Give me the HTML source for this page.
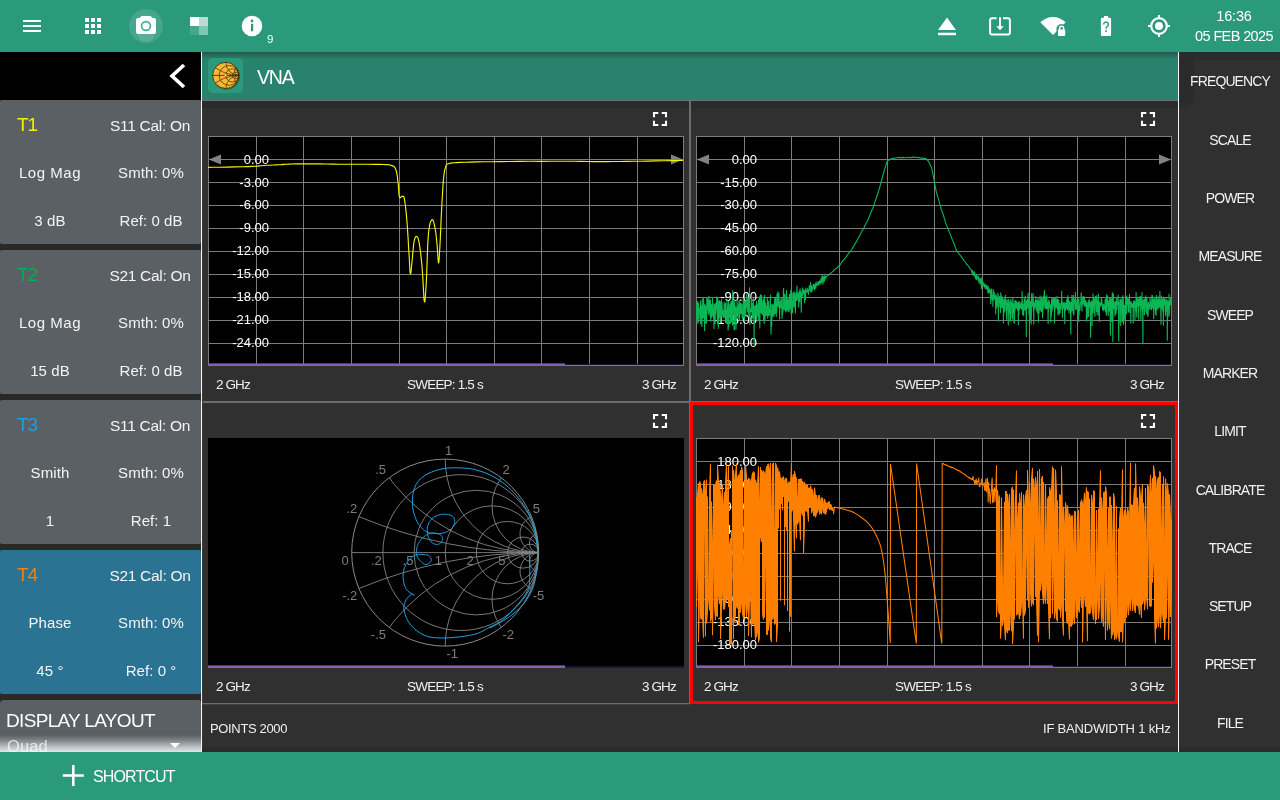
<!DOCTYPE html><html><head><meta charset="utf-8"><style>
*{box-sizing:border-box}
html,body{margin:0;padding:0;width:1280px;height:800px;overflow:hidden;background:#303030;font-family:"Liberation Sans",sans-serif;color:#fff}
.a{position:absolute}
.t{position:absolute;white-space:pre;line-height:1;will-change:transform}
svg{will-change:transform}
</style></head><body>
<div class="a" style="left:0;top:0;width:1280px;height:52px;background:#2a997c"></div>
<div class="a" style="left:0;top:52px;width:201px;height:48px;background:#000"></div>
<div class="a" style="left:202px;top:52px;width:976px;height:48px;background:#29826e"></div>
<div class="a" style="left:0;top:100px;width:201px;height:652px;background:#282928"></div>
<div class="a" style="left:0;top:100px;width:201px;height:144px;background:#5a6063;border-radius:2px"></div>
<div class="t" style="left:17px;top:114.9px;font-size:19px;color:#f0f000;letter-spacing:-1.0px;">T1</div>
<div class="t" style="left:149.6px;top:117.7px;font-size:15.5px;color:#f4f4f4;letter-spacing:-0.3px;transform:translateX(-50%);">S11 Cal: On</div>
<div class="t" style="left:50.3px;top:164.9px;font-size:15px;color:#f4f4f4;letter-spacing:0.55px;transform:translateX(-50%);">Log Mag</div>
<div class="t" style="left:150.5px;top:164.9px;font-size:15px;color:#f4f4f4;letter-spacing:0.1px;transform:translateX(-50%);">Smth: 0%</div>
<div class="t" style="left:50.2px;top:213.3px;font-size:15px;color:#f4f4f4;letter-spacing:0.1px;transform:translateX(-50%);">3 dB</div>
<div class="t" style="left:150.7px;top:213.3px;font-size:15px;color:#f4f4f4;letter-spacing:0.05px;transform:translateX(-50%);">Ref: 0 dB</div>
<div class="a" style="left:0;top:250px;width:201px;height:144px;background:#5a6063;border-radius:2px"></div>
<div class="t" style="left:17px;top:264.9px;font-size:19px;color:#00b050;letter-spacing:-1.0px;">T2</div>
<div class="t" style="left:149.6px;top:267.7px;font-size:15.5px;color:#f4f4f4;letter-spacing:-0.3px;transform:translateX(-50%);">S21 Cal: On</div>
<div class="t" style="left:50.3px;top:314.9px;font-size:15px;color:#f4f4f4;letter-spacing:0.55px;transform:translateX(-50%);">Log Mag</div>
<div class="t" style="left:150.5px;top:314.9px;font-size:15px;color:#f4f4f4;letter-spacing:0.1px;transform:translateX(-50%);">Smth: 0%</div>
<div class="t" style="left:50.2px;top:363.3px;font-size:15px;color:#f4f4f4;letter-spacing:0.1px;transform:translateX(-50%);">15 dB</div>
<div class="t" style="left:150.7px;top:363.3px;font-size:15px;color:#f4f4f4;letter-spacing:0.05px;transform:translateX(-50%);">Ref: 0 dB</div>
<div class="a" style="left:0;top:400px;width:201px;height:144px;background:#5a6063;border-radius:2px"></div>
<div class="t" style="left:17px;top:414.9px;font-size:19px;color:#1ea0e0;letter-spacing:-1.0px;">T3</div>
<div class="t" style="left:149.6px;top:417.7px;font-size:15.5px;color:#f4f4f4;letter-spacing:-0.3px;transform:translateX(-50%);">S11 Cal: On</div>
<div class="t" style="left:50.3px;top:464.9px;font-size:15px;color:#f4f4f4;letter-spacing:0.1px;transform:translateX(-50%);">Smith</div>
<div class="t" style="left:150.5px;top:464.9px;font-size:15px;color:#f4f4f4;letter-spacing:0.1px;transform:translateX(-50%);">Smth: 0%</div>
<div class="t" style="left:50.2px;top:513.3px;font-size:15px;color:#f4f4f4;letter-spacing:0.1px;transform:translateX(-50%);">1</div>
<div class="t" style="left:150.7px;top:513.3px;font-size:15px;color:#f4f4f4;letter-spacing:0.05px;transform:translateX(-50%);">Ref: 1</div>
<div class="a" style="left:0;top:550px;width:201px;height:144px;background:#2a7393;border-radius:2px"></div>
<div class="t" style="left:17px;top:564.9px;font-size:19px;color:#f08010;letter-spacing:-1.0px;">T4</div>
<div class="t" style="left:149.6px;top:567.7px;font-size:15.5px;color:#f4f4f4;letter-spacing:-0.3px;transform:translateX(-50%);">S21 Cal: On</div>
<div class="t" style="left:50.3px;top:614.9px;font-size:15px;color:#f4f4f4;letter-spacing:0.1px;transform:translateX(-50%);">Phase</div>
<div class="t" style="left:150.5px;top:614.9px;font-size:15px;color:#f4f4f4;letter-spacing:0.1px;transform:translateX(-50%);">Smth: 0%</div>
<div class="t" style="left:50.2px;top:663.3px;font-size:15px;color:#f4f4f4;letter-spacing:0.1px;transform:translateX(-50%);">45 °</div>
<div class="t" style="left:150.7px;top:663.3px;font-size:15px;color:#f4f4f4;letter-spacing:0.05px;transform:translateX(-50%);">Ref: 0 °</div>
<div class="a" style="left:0;top:700px;width:201px;height:52px;background:#5a6063;border-radius:4px 3px 0 0"></div>
<div class="t" style="left:5.7px;top:710.9px;font-size:19px;color:#fff;letter-spacing:-0.68px;">DISPLAY LAYOUT</div>
<div class="a" style="left:0;top:735px;width:201px;height:17px;background:linear-gradient(rgba(90,96,99,0) 0,rgba(150,155,158,0.7) 35%,rgba(200,204,207,0.95) 75%,#e2e5e7 100%)"></div>
<div class="t" style="left:6.5px;top:737.5px;font-size:16.5px;color:rgba(245,247,248,0.8);letter-spacing:0.1px;">Quad</div>
<svg class="a" style="left:0;top:0" width="201" height="800"><path d="M170 743L180 743L175 748Z" fill="#fff"/></svg>
<svg class="a" style="left:0;top:52px" width="201" height="48"><path d="M184 13L172 24L184 35" stroke="#fff" stroke-width="3.6" fill="none" stroke-linecap="butt" stroke-linejoin="miter"/></svg>
<div class="a" style="left:201px;top:52px;width:1px;height:700px;background:#f4f4f4"></div><div class="a" style="left:202px;top:100px;width:1px;height:652px;background:#3a3739"></div>
<div class="a" style="left:1178px;top:52px;width:1px;height:700px;background:#f4f4f4"></div>
<svg class="a" style="left:0;top:0" width="1280" height="52"><path d="M23 20H41V22H23ZM23 25H41V27H23ZM23 30H41V32H23Z" fill="#fff"/><path d="M85 18h4v4h-4ZM91 18h4v4h-4ZM97 18h4v4h-4ZM85 24h4v4h-4ZM91 24h4v4h-4ZM97 24h4v4h-4ZM85 30h4v4h-4ZM91 30h4v4h-4ZM97 30h4v4h-4Z" fill="#fff"/><circle cx="146" cy="26" r="17" fill="#fff" fill-opacity="0.13"/><circle cx="146" cy="33.5" r="8.5" fill="#fff" fill-opacity="0.10"/><path d="M141.5 16h9l2 2h1.5a2 2 0 0 1 2 2v12a2 2 0 0 1 -2 2h-16a2 2 0 0 1 -2 -2v-12a2 2 0 0 1 2 -2h1.5Z" fill="#fff"/><circle cx="146" cy="26" r="4.4" fill="none" stroke="#45a98d" stroke-width="1.6"/><rect x="190" y="17" width="9" height="9" fill="#fff"/><rect x="199" y="17" width="9" height="9" fill="#b7ded5"/><rect x="190" y="26" width="9" height="9" fill="#45a78b"/><rect x="199" y="26" width="9" height="9" fill="#80c6b4"/><circle cx="252" cy="26" r="10.3" fill="#fff"/><circle cx="252" cy="21" r="1.4" fill="#2a997c"/><rect x="251" y="23.8" width="2.2" height="7.4" fill="#2a997c"/><path d="M947 17.5L956 30H938Z" fill="#fff"/><rect x="938" y="32.7" width="18" height="2.5" fill="#fff"/><path d="M996.6 18.2H992.1a2 2 0 0 0 -2 2V32.6a2 2 0 0 0 2 2H1007.9a2 2 0 0 0 2 -2V20.2a2 2 0 0 0 -2 -2H1003" fill="none" stroke="#fff" stroke-width="2"/><rect x="999" y="17.2" width="2" height="10" fill="#fff"/><path d="M996.2 26.2H1003.8L1000 30.2Z" fill="#fff"/><path d="M1053 35L1040.3 22.3A18 18 0 0 1 1065.7 22.3L1063.4 24.6A5 5 0 0 0 1056.5 27.4V31.5Z" fill="#fff"/><rect x="1058" y="29.6" width="7.2" height="6.3" rx="0.8" fill="#fff"/><path d="M1059.6 30V28.3a2 2 0 0 1 4 0V30" fill="none" stroke="#fff" stroke-width="1.5"/><path d="M1104 15.9h4.1v1.9h1.8a1.2 1.2 0 0 1 1.2 1.2V34.7a1.2 1.2 0 0 1 -1.2 1.2h-7.8a1.2 1.2 0 0 1 -1.2 -1.2V19a1.2 1.2 0 0 1 1.2 -1.2h1.9Z" fill="#fff"/><path d="M1103.6 24.5a2.4 2.4 0 1 1 3.6 2.1c-0.9 0.5 -1.2 1 -1.2 2.2" fill="none" stroke="#2a997c" stroke-width="1.5"/><rect x="1105.2" y="30.2" width="1.7" height="1.7" fill="#2a997c"/><circle cx="1159" cy="26" r="7.8" fill="none" stroke="#fff" stroke-width="2.2"/><circle cx="1159" cy="26" r="4" fill="#fff"/><path d="M1159 15V18.5M1159 33.5V37M1148 26H1151.5M1166.5 26H1170" stroke="#fff" stroke-width="2"/></svg>
<div class="t" style="left:267px;top:33.8px;font-size:11.5px;color:#fff;letter-spacing:0px;">9</div>
<div class="t" style="left:1234px;top:8.7px;font-size:14.5px;color:#fff;letter-spacing:-0.2px;transform:translateX(-50%);">16:36</div>
<div class="t" style="left:1234px;top:28.7px;font-size:14.5px;color:#fff;letter-spacing:-0.62px;transform:translateX(-50%);">05 FEB 2025</div>
<div class="a" style="left:202px;top:52px;width:976px;height:7px;background:linear-gradient(#225a48,rgba(41,130,110,0))"></div>
<div class="a" style="left:208px;top:58px;width:35px;height:35px;background:#2a997c;border-radius:5px"></div>
<svg class="a" style="left:208px;top:58px" width="35" height="35"><defs><clipPath id="cc"><circle cx="17.75" cy="17.4" r="13.2"/></clipPath></defs><circle cx="18.5" cy="18.3" r="13.4" fill="#143f33" fill-opacity="0.55"/><circle cx="17.75" cy="17.4" r="13.2" fill="#f7b835"/><g clip-path="url(#cc)" stroke="#4a3208" stroke-width="0.75" fill="none"><circle cx="21.05" cy="17.4" r="9.90"/><circle cx="24.35" cy="17.4" r="6.60"/><circle cx="27.65" cy="17.4" r="3.30"/><circle cx="30.95" cy="-22.20" r="39.60"/><circle cx="30.95" cy="57.00" r="39.60"/><circle cx="30.95" cy="4.20" r="13.20"/><circle cx="30.95" cy="30.60" r="13.20"/><circle cx="30.95" cy="13.00" r="4.40"/><circle cx="30.95" cy="21.80" r="4.40"/><path d="M4.5 17.4H31" stroke-width="0.9"/></g><circle cx="17.75" cy="17.4" r="13.1" fill="none" stroke="#3a2806" stroke-width="0.9"/><circle cx="17.5" cy="17.4" r="0.8" fill="#fff"/></svg>
<div class="t" style="left:256.8px;top:67.7px;font-size:19.5px;color:#fff;letter-spacing:-1.2px;">VNA</div>
<div class="a" style="left:1179px;top:52px;width:101px;height:700px;background:#303030"></div>
<div class="a" style="left:1179px;top:52px;width:15px;height:56px;background:#2b2b2b;border-bottom-right-radius:12px"></div>
<div class="a" style="left:1179px;top:52px;width:101px;height:8px;background:#2b2b2b"></div>
<div class="t" style="left:1230px;top:74.1px;font-size:14px;color:#f2f2f2;letter-spacing:-0.9px;transform:translateX(-50%);">FREQUENCY</div>
<div class="t" style="left:1230px;top:132.5px;font-size:14px;color:#f2f2f2;letter-spacing:-0.9px;transform:translateX(-50%);">SCALE</div>
<div class="t" style="left:1230px;top:190.8px;font-size:14px;color:#f2f2f2;letter-spacing:-0.9px;transform:translateX(-50%);">POWER</div>
<div class="t" style="left:1230px;top:249.1px;font-size:14px;color:#f2f2f2;letter-spacing:-0.9px;transform:translateX(-50%);">MEASURE</div>
<div class="t" style="left:1230px;top:307.5px;font-size:14px;color:#f2f2f2;letter-spacing:-0.9px;transform:translateX(-50%);">SWEEP</div>
<div class="t" style="left:1230px;top:365.8px;font-size:14px;color:#f2f2f2;letter-spacing:-0.9px;transform:translateX(-50%);">MARKER</div>
<div class="t" style="left:1230px;top:424.1px;font-size:14px;color:#f2f2f2;letter-spacing:-0.9px;transform:translateX(-50%);">LIMIT</div>
<div class="t" style="left:1230px;top:482.5px;font-size:14px;color:#f2f2f2;letter-spacing:-0.9px;transform:translateX(-50%);">CALIBRATE</div>
<div class="t" style="left:1230px;top:540.8px;font-size:14px;color:#f2f2f2;letter-spacing:-0.9px;transform:translateX(-50%);">TRACE</div>
<div class="t" style="left:1230px;top:599.1px;font-size:14px;color:#f2f2f2;letter-spacing:-0.9px;transform:translateX(-50%);">SETUP</div>
<div class="t" style="left:1230px;top:657.4px;font-size:14px;color:#f2f2f2;letter-spacing:-0.9px;transform:translateX(-50%);">PRESET</div>
<div class="t" style="left:1230px;top:715.8px;font-size:14px;color:#f2f2f2;letter-spacing:-0.9px;transform:translateX(-50%);">FILE</div>
<svg class="a" style="left:0;top:0" width="1280" height="800"><rect x="202" y="100" width="976" height="1" fill="#6e6e6e"/><rect x="202" y="101" width="976" height="7" fill="#2b2b2b"/><rect x="689" y="101" width="2" height="603" fill="#6c6e6a"/><rect x="203" y="401" width="975" height="2" fill="#6c6e6a"/><rect x="202" y="703" width="488" height="1.3" fill="#6c6e6a"/><rect x="208" y="136" width="476" height="230" fill="#000"/><path d="M256.5 136V366M303.5 136V366M351.5 136V366M399.5 136V366M446.5 136V366M494.5 136V366M541.5 136V366M589.5 136V366M637.5 136V366M208 159.5H684M208 182.5H684M208 205.5H684M208 228.5H684M208 251.5H684M208 274.5H684M208 297.5H684M208 320.5H684M208 343.5H684" stroke="#7c7c7c" stroke-width="1" fill="none"/><rect x="208.5" y="136.5" width="475" height="229" fill="none" stroke="#7c7c7c" stroke-width="1"/><rect x="209" y="364" width="474" height="1" fill="#1c1630"/><rect x="208" y="363.4" width="357" height="2.6" fill="#8160b4"/><path d="M654 117.3V113H658.3M661.7 113H666V117.3M666 120.7V125H661.7M658.3 125H654V120.7" fill="none" stroke="#fff" stroke-width="2.1"/><rect x="696" y="136" width="476" height="230" fill="#000"/><path d="M744.5 136V366M791.5 136V366M839.5 136V366M887.5 136V366M934.5 136V366M982.5 136V366M1029.5 136V366M1077.5 136V366M1125.5 136V366M696 159.5H1172M696 182.5H1172M696 205.5H1172M696 228.5H1172M696 251.5H1172M696 274.5H1172M696 297.5H1172M696 320.5H1172M696 343.5H1172" stroke="#7c7c7c" stroke-width="1" fill="none"/><rect x="696.5" y="136.5" width="475" height="229" fill="none" stroke="#7c7c7c" stroke-width="1"/><rect x="697" y="364" width="474" height="1" fill="#1c1630"/><rect x="696" y="363.4" width="357" height="2.6" fill="#8160b4"/><path d="M1142 117.3V113H1146.3M1149.7 113H1154V117.3M1154 120.7V125H1149.7M1146.3 125H1142V120.7" fill="none" stroke="#fff" stroke-width="2.1"/><rect x="208" y="438" width="476" height="230" fill="#000"/><rect x="208" y="666" width="476" height="2" fill="#1a1530"/><rect x="208" y="665.4" width="357" height="2.6" fill="#8160b4"/><path d="M654 419.3V415H658.3M661.7 415H666V419.3M666 422.7V427H661.7M658.3 427H654V422.7" fill="none" stroke="#fff" stroke-width="2.1"/><rect x="696" y="438" width="476" height="230" fill="#000"/><path d="M744.5 438V668M791.5 438V668M839.5 438V668M887.5 438V668M934.5 438V668M982.5 438V668M1029.5 438V668M1077.5 438V668M1125.5 438V668M696 461.5H1172M696 484.5H1172M696 507.5H1172M696 530.5H1172M696 553.5H1172M696 576.5H1172M696 599.5H1172M696 622.5H1172M696 645.5H1172" stroke="#7c7c7c" stroke-width="1" fill="none"/><rect x="696.5" y="438.5" width="475" height="229" fill="none" stroke="#7c7c7c" stroke-width="1"/><rect x="697" y="666" width="474" height="1" fill="#1c1630"/><rect x="696" y="665.4" width="357" height="2.6" fill="#8160b4"/><path d="M1142 419.3V415H1146.3M1149.7 415H1154V419.3M1154 422.7V427H1149.7M1146.3 427H1142V422.7" fill="none" stroke="#fff" stroke-width="2.1"/></svg>
<svg class="a" style="left:0;top:0;font-family:'Liberation Sans',sans-serif" width="1280" height="800"><text x="269" y="163.6" text-anchor="end" font-size="13" fill="#fff">0.00</text><text x="269" y="186.5" text-anchor="end" font-size="13" fill="#fff">-3.00</text><text x="269" y="209.4" text-anchor="end" font-size="13" fill="#fff">-6.00</text><text x="269" y="232.3" text-anchor="end" font-size="13" fill="#fff">-9.00</text><text x="269" y="255.2" text-anchor="end" font-size="13" fill="#fff">-12.00</text><text x="269" y="278.1" text-anchor="end" font-size="13" fill="#fff">-15.00</text><text x="269" y="301.0" text-anchor="end" font-size="13" fill="#fff">-18.00</text><text x="269" y="323.9" text-anchor="end" font-size="13" fill="#fff">-21.00</text><text x="269" y="346.8" text-anchor="end" font-size="13" fill="#fff">-24.00</text><text x="757" y="163.6" text-anchor="end" font-size="13" fill="#fff">0.00</text><text x="757" y="186.5" text-anchor="end" font-size="13" fill="#fff">-15.00</text><text x="757" y="209.4" text-anchor="end" font-size="13" fill="#fff">-30.00</text><text x="757" y="232.3" text-anchor="end" font-size="13" fill="#fff">-45.00</text><text x="757" y="255.2" text-anchor="end" font-size="13" fill="#fff">-60.00</text><text x="757" y="278.1" text-anchor="end" font-size="13" fill="#fff">-75.00</text><text x="757" y="301.0" text-anchor="end" font-size="13" fill="#fff">-90.00</text><text x="757" y="323.9" text-anchor="end" font-size="13" fill="#fff">-105.00</text><text x="757" y="346.8" text-anchor="end" font-size="13" fill="#fff">-120.00</text><text x="757" y="465.6" text-anchor="end" font-size="13" fill="#fff">180.00</text><text x="757" y="488.5" text-anchor="end" font-size="13" fill="#fff">135.00</text><text x="757" y="511.4" text-anchor="end" font-size="13" fill="#fff">90.00</text><text x="757" y="534.3" text-anchor="end" font-size="13" fill="#fff">45.00</text><text x="757" y="557.2" text-anchor="end" font-size="13" fill="#fff">0.00</text><text x="757" y="580.1" text-anchor="end" font-size="13" fill="#fff">-45.00</text><text x="757" y="603.0" text-anchor="end" font-size="13" fill="#fff">-90.00</text><text x="757" y="625.9" text-anchor="end" font-size="13" fill="#fff">-135.00</text><text x="757" y="648.8" text-anchor="end" font-size="13" fill="#fff">-180.00</text><path d="M208.8 159.5L221 154.5V164.5Z" fill="#828282"/><path d="M683.2 159.5L671 154.5V164.5Z" fill="#828282"/><path d="M696.8 159.5L709 154.5V164.5Z" fill="#828282"/><path d="M1171.2 159.5L1159 154.5V164.5Z" fill="#828282"/></svg>
<svg class="a" style="left:0;top:0;font-family:'Liberation Sans',sans-serif" width="1280" height="800"><defs><clipPath id="c1"><rect x="208" y="136" width="476" height="229"/></clipPath><clipPath id="c2"><rect x="696" y="136" width="476" height="229"/></clipPath><clipPath id="c4"><rect x="696" y="438" width="476" height="229"/></clipPath></defs><g clip-path="url(#c1)"><path d="M208.0 167.4L212.6 167.3L219.3 167.2L227.0 167.1L235.0 166.9L242.3 166.8L248.0 166.6L252.0 166.4L255.1 166.2L257.4 166.1L259.5 165.9L261.6 165.7L264.0 165.5L266.8 165.3L269.5 165.2L272.3 165.0L275.1 164.9L278.0 164.7L281.0 164.6L283.8 164.4L286.4 164.3L289.1 164.1L292.0 164.0L295.6 163.9L300.0 163.8L305.5 163.8L311.8 163.9L318.7 163.9L325.9 164.0L333.1 164.1L340.0 164.2L347.0 164.2L354.4 164.2L361.8 164.2L368.7 164.3L375.0 164.3L380.0 164.4L383.7 164.5L386.4 164.6L388.2 164.7L389.6 164.9L390.8 165.2L392.0 165.6L393.2 166.1L394.0 166.5L394.6 167.1L395.1 167.9L395.5 168.8L396.0 170.0L396.5 171.5L396.8 173.3L397.2 175.3L397.5 177.5L397.7 179.7L398.0 182.0L398.3 184.5L398.5 187.4L398.7 190.3L398.9 193.0L399.1 195.4L399.4 197.0L399.8 197.8L400.2 197.8L400.6 197.5L401.1 196.9L401.6 196.5L402.0 196.4L402.4 196.4L402.8 196.3L403.2 196.2L403.6 196.5L404.0 197.3L404.4 199.0L404.8 201.5L405.3 204.8L405.7 208.7L406.2 212.9L406.6 217.4L407.0 222.0L407.4 227.0L407.7 232.4L408.1 238.2L408.4 243.9L408.7 249.3L409.0 254.0L409.3 258.4L409.5 262.7L409.7 266.8L409.9 270.1L410.2 272.7L410.4 274.0L410.7 273.9L410.9 272.7L411.2 270.5L411.4 267.8L411.7 264.8L412.0 262.0L412.3 259.0L412.6 255.4L412.9 251.6L413.3 247.9L413.6 244.6L414.0 242.0L414.4 240.1L414.8 238.7L415.2 237.6L415.6 236.9L416.0 236.5L416.4 236.4L416.8 236.5L417.2 236.8L417.7 237.4L418.1 238.4L418.5 239.9L419.0 242.0L419.5 244.8L420.0 248.2L420.5 252.1L421.0 256.4L421.5 261.1L422.0 266.0L422.4 272.0L422.9 279.3L423.3 286.9L423.7 293.9L424.0 299.2L424.4 302.0L424.8 302.0L425.1 299.9L425.4 296.1L425.7 291.3L426.1 285.7L426.4 280.0L426.7 273.4L427.0 265.3L427.3 256.5L427.6 247.9L428.0 240.1L428.4 234.0L428.9 229.5L429.5 226.0L430.1 223.4L430.8 221.5L431.4 220.3L432.0 219.6L432.5 219.6L433.1 220.4L433.6 221.9L434.1 223.8L434.6 225.9L435.0 228.0L435.4 230.2L435.8 232.7L436.1 235.3L436.4 238.2L436.7 241.1L437.0 244.0L437.3 247.4L437.6 251.5L437.8 255.7L438.1 259.4L438.3 262.0L438.6 263.0L438.8 262.2L439.1 260.0L439.3 256.8L439.5 252.9L439.8 248.5L440.0 244.0L440.3 239.2L440.5 233.7L440.8 227.8L441.0 221.7L441.3 215.7L441.6 210.0L441.9 204.3L442.2 198.4L442.6 192.6L442.9 187.1L443.2 182.2L443.6 178.0L444.0 174.7L444.3 172.2L444.7 170.2L445.1 168.5L445.6 167.2L446.0 166.0L446.4 165.0L446.7 164.4L447.0 164.1L447.4 164.0L448.0 163.8L449.0 163.6L450.0 163.3L451.0 163.1L452.2 162.9L453.9 162.7L456.4 162.6L460.0 162.4L464.8 162.2L470.4 162.1L476.9 161.9L484.1 161.8L491.8 161.7L500.0 161.6L509.1 161.5L519.3 161.4L530.0 161.3L540.7 161.3L550.9 161.2L560.0 161.2L567.8 161.2L574.8 161.3L581.2 161.4L587.4 161.5L593.6 161.6L600.0 161.6L606.6 161.6L613.2 161.5L619.8 161.5L626.4 161.4L633.2 161.3L640.0 161.2L647.5 161.1L655.7 160.9L664.0 160.8L671.7 160.6L678.3 160.5L683.0 160.4" fill="none" stroke="#f4f400" stroke-width="1.15" stroke-linejoin="round"/></g><g clip-path="url(#c2)"><path d="M696.0 301.0L696.2 311.5L696.4 312.1L696.7 316.1L696.9 319.0L697.1 315.4L697.3 303.9L697.5 301.6L697.8 323.5L698.0 313.5L698.2 304.1L698.4 303.1L698.6 321.4L698.9 308.7L699.1 319.0L699.3 313.7L699.5 309.1L699.7 308.8L700.0 307.0L700.2 310.5L700.4 300.7L700.6 323.6L700.8 319.8L701.1 313.3L701.3 308.6L701.5 305.6L701.7 306.9L701.9 326.2L702.2 299.0L702.4 316.9L702.6 308.4L702.8 318.3L703.0 309.4L703.3 317.8L703.5 297.4L703.7 303.1L703.9 309.0L704.1 313.2L704.4 315.5L704.6 330.5L704.8 307.6L705.0 304.2L705.2 308.5L705.5 306.6L705.7 306.3L705.9 323.3L706.1 312.8L706.3 310.5L706.6 323.1L706.8 297.5L707.0 310.2L707.2 309.3L707.4 304.1L707.7 303.4L707.9 298.8L708.1 306.0L708.3 314.2L708.5 305.9L708.8 312.3L709.0 296.4L709.2 306.9L709.4 307.3L709.6 300.9L709.9 315.8L710.1 309.0L710.3 307.4L710.5 300.0L710.7 321.2L711.0 310.2L711.2 312.8L711.4 304.5L711.6 317.5L711.8 313.7L712.1 304.6L712.3 315.6L712.5 298.2L712.7 304.0L712.9 310.6L713.2 304.0L713.4 317.4L713.6 318.9L713.8 311.6L714.0 328.6L714.3 314.4L714.5 304.1L714.7 303.9L714.9 307.3L715.1 323.6L715.4 311.2L715.6 313.7L715.8 309.3L716.0 302.5L716.2 308.4L716.5 305.6L716.7 296.9L716.9 303.4L717.1 311.9L717.3 319.0L717.6 323.8L717.8 298.3L718.0 319.8L718.2 302.1L718.4 328.3L718.7 301.5L718.9 303.2L719.1 318.9L719.3 314.3L719.5 300.6L719.8 310.4L720.0 316.8L720.2 313.6L720.4 302.1L720.6 312.3L720.9 321.2L721.1 301.5L721.3 307.3L721.5 299.5L721.7 315.8L722.0 302.5L722.2 307.4L722.4 313.8L722.6 314.0L722.8 312.2L723.1 317.4L723.3 310.6L723.5 313.4L723.7 317.3L723.9 315.4L724.2 302.2L724.4 307.7L724.6 311.6L724.8 317.8L725.0 311.9L725.3 305.3L725.5 303.2L725.7 322.5L725.9 309.7L726.1 319.4L726.4 309.8L726.6 319.8L726.8 323.5L727.0 299.9L727.2 318.4L727.5 305.1L727.7 305.6L727.9 307.4L728.1 330.2L728.3 307.6L728.6 301.2L728.8 326.7L729.0 311.8L729.2 315.3L729.4 307.7L729.7 308.7L729.9 304.3L730.1 304.0L730.3 308.0L730.5 323.1L730.8 319.4L731.0 300.7L731.2 308.3L731.4 321.7L731.6 305.4L731.9 305.4L732.1 301.4L732.3 305.3L732.5 325.3L732.7 290.5L733.0 312.7L733.2 310.0L733.4 301.3L733.6 306.2L733.8 309.6L734.1 329.6L734.3 304.7L734.5 329.8L734.7 299.9L734.9 307.1L735.2 306.4L735.4 318.6L735.6 314.6L735.8 317.6L736.0 329.2L736.3 307.4L736.5 308.8L736.7 316.4L736.9 312.1L737.1 300.4L737.4 316.0L737.6 311.0L737.8 307.8L738.0 317.0L738.2 318.5L738.5 305.3L738.7 304.0L738.9 304.0L739.1 301.1L739.3 300.3L739.6 320.1L739.8 307.0L740.0 305.9L740.2 307.6L740.4 303.1L740.7 313.6L740.9 311.2L741.1 309.7L741.3 303.8L741.5 310.5L741.8 304.5L742.0 315.5L742.2 317.4L742.4 315.8L742.6 319.2L742.9 318.9L743.1 306.6L743.3 298.3L743.5 306.0L743.7 310.5L744.0 314.1L744.2 304.5L744.4 320.7L744.6 302.6L744.8 303.0L745.1 312.0L745.3 312.4L745.5 300.9L745.7 315.8L745.9 309.1L746.2 308.8L746.4 305.8L746.6 306.8L746.8 294.1L747.0 305.1L747.3 304.0L747.5 303.3L747.7 311.6L747.9 306.1L748.1 297.9L748.4 315.0L748.6 298.5L748.8 297.7L749.0 306.3L749.2 306.7L749.5 287.9L749.7 320.1L749.9 324.4L750.1 308.8L750.3 309.9L750.6 311.0L750.8 310.4L751.0 308.4L751.2 311.8L751.4 296.3L751.7 304.1L751.9 303.2L752.1 314.5L752.3 318.7L752.5 303.9L752.8 317.2L753.0 307.1L753.2 310.6L753.4 297.8L753.6 306.8L753.9 320.7L754.1 344.9L754.3 306.8L754.5 312.1L754.7 310.1L755.0 315.9L755.2 305.2L755.4 310.0L755.6 306.1L755.8 314.2L756.1 319.8L756.3 306.1L756.5 301.4L756.7 319.4L756.9 304.8L757.2 308.0L757.4 315.7L757.6 309.7L757.8 315.9L758.0 303.8L758.3 312.7L758.5 299.7L758.7 320.9L758.9 310.1L759.1 309.0L759.4 296.9L759.6 314.1L759.8 327.9L760.0 311.6L760.2 308.2L760.5 294.9L760.7 298.7L760.9 312.7L761.1 312.6L761.3 307.4L761.6 295.3L761.8 306.0L762.0 313.4L762.2 301.9L762.4 314.4L762.7 305.9L762.9 303.5L763.1 303.4L763.3 299.3L763.5 319.6L763.8 315.7L764.0 317.0L764.2 323.4L764.4 295.4L764.6 303.0L764.9 319.7L765.1 316.7L765.3 305.4L765.5 302.7L765.7 315.2L766.0 310.4L766.2 306.5L766.4 309.7L766.6 313.0L766.8 315.4L767.1 308.2L767.3 298.2L767.5 310.7L767.7 318.3L767.9 305.4L768.2 312.4L768.4 301.3L768.6 315.6L768.8 309.2L769.0 315.4L769.3 313.9L769.5 315.1L769.7 308.8L769.9 305.8L770.1 308.0L770.4 295.1L770.6 311.0L770.8 314.8L771.0 334.1L771.2 325.9L771.5 310.8L771.7 325.9L771.9 304.3L772.1 312.5L772.3 304.2L772.6 309.3L772.8 316.8L773.0 309.5L773.2 305.0L773.4 313.3L773.7 311.5L773.9 311.6L774.1 316.1L774.3 303.9L774.5 300.7L774.8 298.2L775.0 311.7L775.2 313.4L775.4 300.5L775.6 297.3L775.9 307.6L776.1 304.6L776.3 316.4L776.5 303.1L776.7 312.7L777.0 294.0L777.2 307.1L777.4 295.7L777.6 301.2L777.8 291.9L778.1 304.0L778.3 305.1L778.5 300.5L778.7 306.9L778.9 293.1L779.2 302.5L779.4 304.2L779.6 319.1L779.8 307.5L780.0 304.9L780.3 301.7L780.5 304.3L780.7 307.7L780.9 299.0L781.1 303.1L781.4 303.7L781.6 307.6L781.8 298.4L782.0 318.4L782.2 307.1L782.5 314.8L782.7 307.4L782.9 311.7L783.1 304.0L783.3 292.5L783.6 288.3L783.8 306.5L784.0 309.2L784.2 304.3L784.4 308.3L784.7 296.0L784.9 294.1L785.1 310.1L785.3 304.5L785.5 305.9L785.8 311.9L786.0 301.6L786.2 299.7L786.4 296.1L786.6 290.2L786.9 310.8L787.1 307.2L787.3 299.1L787.5 298.6L787.7 307.1L788.0 299.0L788.2 311.2L788.4 306.6L788.6 302.1L788.8 300.2L789.1 311.2L789.3 299.2L789.5 294.2L789.7 308.9L789.9 304.2L790.2 304.1L790.4 299.7L790.6 294.5L790.8 290.4L791.0 313.3L791.3 301.8L791.5 302.2L791.7 303.4L791.9 302.9L792.1 301.6L792.4 312.7L792.6 312.8L792.8 293.0L793.0 299.0L793.2 293.3L793.5 306.4L793.7 292.4L793.9 299.6L794.1 299.1L794.3 291.9L794.6 302.5L794.8 307.8L795.0 296.2L795.2 301.6L795.4 313.1L795.7 294.4L795.9 294.0L796.1 292.6L796.3 295.0L796.5 300.5L796.8 292.3L797.0 286.0L797.2 292.6L797.4 294.7L797.6 296.3L797.9 300.2L798.1 298.0L798.3 296.8L798.5 293.2L798.7 307.3L799.0 296.9L799.2 291.2L799.4 291.5L799.6 301.8L799.8 293.4L800.1 288.9L800.3 293.2L800.5 291.8L800.7 296.9L800.9 294.0L801.2 312.2L801.4 306.1L801.6 296.3L801.8 293.8L802.0 291.0L802.3 296.3L802.5 287.8L802.7 288.1L802.9 293.9L803.1 290.6L803.4 290.6L803.6 292.9L803.8 290.0L804.0 289.9L804.2 293.9L804.5 302.7L804.7 295.0L804.9 291.8L805.1 290.5L805.3 292.5L805.6 299.8L805.8 288.0L806.0 291.4L806.2 291.5L806.4 291.4L806.7 291.6L806.9 292.3L807.1 291.3L807.3 290.4L807.5 288.5L807.8 289.8L808.0 289.9L808.2 291.0L808.4 294.5L808.6 291.9L808.9 289.5L809.1 290.5L809.3 285.8L809.5 288.8L809.7 286.8L810.0 289.9L810.2 285.0L810.4 289.0L810.6 282.4L810.8 292.1L811.1 290.9L811.3 285.3L811.5 289.5L811.7 287.6L811.9 291.8L812.2 289.9L812.4 287.6L812.6 287.3L812.8 288.9L813.0 284.8L813.3 288.8L813.5 287.2L813.7 284.6L813.9 285.0L814.1 284.7L814.4 285.2L814.6 290.1L814.8 285.3L815.0 286.4L815.2 283.8L815.5 288.2L815.7 286.0L815.9 288.3L816.1 282.0L816.3 283.9L816.6 285.0L816.8 285.2L817.0 285.4L817.2 285.5L817.4 283.6L817.7 283.8L817.9 281.5L818.1 283.3L818.3 282.1L818.5 285.2L818.8 284.1L819.0 282.3L819.2 283.8L819.4 281.1L819.6 282.2L819.9 281.0L820.1 283.9L820.3 281.4L820.5 282.8L820.7 280.9L821.0 278.5L821.2 282.6L821.4 281.5L821.6 282.0L821.8 278.3L822.1 275.9L822.3 279.5L822.5 281.0L822.7 275.9L822.9 284.3L823.2 281.1L823.4 281.5L823.6 276.9L823.8 280.8L824.0 279.3L824.3 281.2L824.5 281.3L824.7 275.6L824.9 276.3L825.1 276.1L825.4 276.7L825.6 277.1L825.8 278.9L826.0 276.8L827.2 275.8L828.4 275.3L829.6 273.9L830.8 273.2L832.0 272.1L833.2 271.3L834.4 269.7L835.6 268.8L836.8 268.2L838.0 266.8L839.2 265.4L840.4 264.5L841.6 262.3L842.8 260.8L844.0 259.7L845.2 258.2L846.4 256.8L847.6 254.7L848.8 253.0L850.0 251.9L851.2 250.2L852.4 248.4L853.6 246.4L854.8 244.1L856.0 242.4L857.2 239.9L858.4 237.8L859.6 236.1L860.8 233.2L862.0 230.9L863.2 229.5L864.4 226.7L865.6 224.2L866.8 222.1L868.0 219.8L869.2 216.8L870.4 213.7L871.6 210.8L872.8 208.3L874.0 205.2L875.2 201.2L876.4 197.7L877.6 194.0L878.8 190.3L880.0 186.2L881.2 181.7L882.4 177.0L883.6 172.8L884.8 168.6L886.0 164.9L887.2 161.4L888.4 160.1L889.6 159.9L890.8 158.9L892.0 158.9L893.2 158.0L894.4 158.2L895.6 158.1L896.8 157.7L898.0 157.6L899.2 157.3L900.4 158.0L901.6 157.6L902.8 157.4L904.0 157.6L905.2 157.7L906.4 157.7L907.6 157.2L908.8 157.5L910.0 157.4L911.2 157.6L912.4 157.4L913.6 157.1L914.8 157.1L916.0 157.5L917.2 157.5L918.4 157.6L919.6 157.6L920.8 158.2L922.0 158.1L923.2 158.0L924.4 158.6L925.6 158.5L926.8 159.5L928.0 160.6L929.2 162.8L930.4 165.5L931.6 167.7L932.8 173.3L934.0 179.6L935.2 186.3L936.4 192.4L937.6 196.4L938.8 200.3L940.0 204.7L941.2 209.2L942.4 212.2L943.6 215.9L944.8 220.1L946.0 223.9L947.2 226.6L948.4 229.8L949.6 232.6L950.8 235.6L952.0 238.9L953.2 241.6L954.4 244.5L955.6 247.9L956.8 251.0L958.0 252.4L959.2 254.0L960.4 255.5L961.6 257.1L962.8 258.8L964.0 260.7L965.2 262.0L966.4 264.0L967.6 265.0L968.8 266.4L970.0 268.7L971.2 269.8L972.4 273.9L972.6 270.3L972.9 271.0L973.1 274.6L973.3 273.7L973.5 272.8L973.7 275.6L974.0 275.4L974.2 273.6L974.4 273.3L974.6 271.8L974.8 274.9L975.1 277.2L975.3 278.2L975.5 278.7L975.7 275.8L975.9 278.2L976.2 274.3L976.4 279.7L976.6 278.4L976.8 274.9L977.0 276.5L977.3 277.4L977.5 278.5L977.7 277.6L977.9 277.1L978.1 280.1L978.4 278.4L978.6 276.2L978.8 277.0L979.0 283.2L979.2 280.3L979.5 280.0L979.7 278.9L979.9 279.0L980.1 279.4L980.3 282.8L980.6 280.2L980.8 284.4L981.0 277.7L981.2 278.9L981.4 288.6L981.7 281.7L981.9 279.9L982.1 285.4L982.3 281.6L982.5 281.1L982.8 284.6L983.0 284.1L983.2 282.4L983.4 285.1L983.6 284.1L983.9 284.0L984.1 286.7L984.3 285.5L984.5 285.1L984.7 286.9L985.0 283.8L985.2 288.6L985.4 287.9L985.6 287.7L985.8 285.7L986.1 285.3L986.3 287.8L986.5 286.6L986.7 289.5L986.9 285.6L987.2 289.0L987.4 288.1L987.6 289.0L987.8 289.6L988.0 292.9L988.3 286.3L988.5 290.6L988.7 290.3L988.9 289.3L989.1 293.0L989.4 290.3L989.6 291.3L989.8 292.2L990.0 288.7L990.2 290.3L990.5 291.6L990.7 303.7L990.9 297.0L991.1 294.2L991.3 291.8L991.6 289.0L991.8 296.8L992.0 298.2L992.2 300.3L992.4 296.3L992.7 295.0L992.9 306.5L993.1 296.3L993.3 289.5L993.5 295.9L993.8 299.1L994.0 293.7L994.2 292.1L994.4 298.4L994.6 297.4L994.9 295.6L995.1 300.2L995.3 299.6L995.5 297.0L995.7 314.0L996.0 294.4L996.2 302.2L996.4 296.4L996.6 307.8L996.8 297.7L997.1 305.9L997.3 298.2L997.5 297.6L997.7 302.3L997.9 293.1L998.2 296.0L998.4 320.9L998.6 299.6L998.8 299.9L999.0 301.6L999.3 299.7L999.5 296.6L999.7 302.2L999.9 306.6L1000.1 307.2L1000.4 296.9L1000.6 312.5L1000.8 292.7L1001.0 299.7L1001.2 297.7L1001.5 304.0L1001.7 295.9L1001.9 307.8L1002.1 303.9L1002.3 307.0L1002.6 298.1L1002.8 307.1L1003.0 307.5L1003.2 302.9L1003.4 323.1L1003.7 302.1L1003.9 299.4L1004.1 299.9L1004.3 304.9L1004.5 312.0L1004.8 302.0L1005.0 298.1L1005.2 304.8L1005.4 295.3L1005.6 297.6L1005.9 302.6L1006.1 310.5L1006.3 300.6L1006.5 308.8L1006.7 319.5L1007.0 303.0L1007.2 307.5L1007.4 303.0L1007.6 309.6L1007.8 299.4L1008.1 300.2L1008.3 325.1L1008.5 300.3L1008.7 299.6L1008.9 305.3L1009.2 302.0L1009.4 306.8L1009.6 313.3L1009.8 308.5L1010.0 321.3L1010.3 320.0L1010.5 300.3L1010.7 319.4L1010.9 299.6L1011.1 303.3L1011.4 302.1L1011.6 304.2L1011.8 306.7L1012.0 307.0L1012.2 314.4L1012.5 318.9L1012.7 301.4L1012.9 297.9L1013.1 305.2L1013.3 303.7L1013.6 312.9L1013.8 305.8L1014.0 323.1L1014.2 303.8L1014.4 322.8L1014.7 307.8L1014.9 300.3L1015.1 310.2L1015.3 306.2L1015.5 307.0L1015.8 301.9L1016.0 300.9L1016.2 304.5L1016.4 308.0L1016.6 302.1L1016.9 303.5L1017.1 308.6L1017.3 303.7L1017.5 309.6L1017.7 310.4L1018.0 302.5L1018.2 310.3L1018.4 324.8L1018.6 304.0L1018.8 314.8L1019.1 301.3L1019.3 307.0L1019.5 302.9L1019.7 309.0L1019.9 302.3L1020.2 306.8L1020.4 305.3L1020.6 308.2L1020.8 308.1L1021.0 305.9L1021.3 303.4L1021.5 309.0L1021.7 301.4L1021.9 307.4L1022.1 291.6L1022.4 308.2L1022.6 314.7L1022.8 306.7L1023.0 304.9L1023.2 305.6L1023.5 312.4L1023.7 315.6L1023.9 304.4L1024.1 301.0L1024.3 301.1L1024.6 298.8L1024.8 302.7L1025.0 310.0L1025.2 296.1L1025.4 307.7L1025.7 310.8L1025.9 303.5L1026.1 306.1L1026.3 336.4L1026.5 301.3L1026.8 300.4L1027.0 300.1L1027.2 307.8L1027.4 303.3L1027.6 308.1L1027.9 296.5L1028.1 293.1L1028.3 300.1L1028.5 299.6L1028.7 303.9L1029.0 314.6L1029.2 302.6L1029.4 304.9L1029.6 301.2L1029.8 309.7L1030.1 304.8L1030.3 321.3L1030.5 301.2L1030.7 302.9L1030.9 306.9L1031.2 324.1L1031.4 309.5L1031.6 293.6L1031.8 299.2L1032.0 306.8L1032.3 304.4L1032.5 302.0L1032.7 298.6L1032.9 299.5L1033.1 293.4L1033.4 310.4L1033.6 302.0L1033.8 324.1L1034.0 303.2L1034.2 304.0L1034.5 307.2L1034.7 308.3L1034.9 305.4L1035.1 301.1L1035.3 305.9L1035.6 300.8L1035.8 296.5L1036.0 304.0L1036.2 310.0L1036.4 306.6L1036.7 305.0L1036.9 300.5L1037.1 311.4L1037.3 308.3L1037.5 313.0L1037.8 302.2L1038.0 299.2L1038.2 298.3L1038.4 321.9L1038.6 313.0L1038.9 305.8L1039.1 313.0L1039.3 301.3L1039.5 307.0L1039.7 306.8L1040.0 295.9L1040.2 310.0L1040.4 300.6L1040.6 307.8L1040.8 301.3L1041.1 311.8L1041.3 296.7L1041.5 311.2L1041.7 303.8L1041.9 300.0L1042.2 297.6L1042.4 306.8L1042.6 317.8L1042.8 310.3L1043.0 304.9L1043.3 308.8L1043.5 296.3L1043.7 299.6L1043.9 304.6L1044.1 296.1L1044.4 290.4L1044.6 300.1L1044.8 307.7L1045.0 302.8L1045.2 296.8L1045.5 296.8L1045.7 308.0L1045.9 309.2L1046.1 308.3L1046.3 302.7L1046.6 300.7L1046.8 295.6L1047.0 308.6L1047.2 304.7L1047.4 307.3L1047.7 302.5L1047.9 303.7L1048.1 323.5L1048.3 305.8L1048.5 311.3L1048.8 299.9L1049.0 304.7L1049.2 307.4L1049.4 303.7L1049.6 301.2L1049.9 308.3L1050.1 306.1L1050.3 308.0L1050.5 304.7L1050.7 321.7L1051.0 307.3L1051.2 316.9L1051.4 313.4L1051.6 298.4L1051.8 303.0L1052.1 311.0L1052.3 299.8L1052.5 302.3L1052.7 308.1L1052.9 304.4L1053.2 298.4L1053.4 305.1L1053.6 300.0L1053.8 297.8L1054.0 298.2L1054.3 305.2L1054.5 323.1L1054.7 304.6L1054.9 310.2L1055.1 297.3L1055.4 299.1L1055.6 307.7L1055.8 307.2L1056.0 305.6L1056.2 307.7L1056.5 299.6L1056.7 306.8L1056.9 307.8L1057.1 296.5L1057.3 307.2L1057.6 309.8L1057.8 299.8L1058.0 315.1L1058.2 300.8L1058.4 304.3L1058.7 299.7L1058.9 303.3L1059.1 312.5L1059.3 314.3L1059.5 306.5L1059.8 303.5L1060.0 313.0L1060.2 309.9L1060.4 305.7L1060.6 306.2L1060.9 309.2L1061.1 303.2L1061.3 302.4L1061.5 299.9L1061.7 291.2L1062.0 302.3L1062.2 304.1L1062.4 317.5L1062.6 306.4L1062.8 306.6L1063.1 302.5L1063.3 304.2L1063.5 307.1L1063.7 306.0L1063.9 309.0L1064.2 303.7L1064.4 302.5L1064.6 313.7L1064.8 323.8L1065.0 305.1L1065.3 303.3L1065.5 306.1L1065.7 310.5L1065.9 307.7L1066.1 309.0L1066.4 301.6L1066.6 301.9L1066.8 299.3L1067.0 307.8L1067.2 298.8L1067.5 309.4L1067.7 304.0L1067.9 295.6L1068.1 308.9L1068.3 297.5L1068.6 299.8L1068.8 309.0L1069.0 313.2L1069.2 303.9L1069.4 301.7L1069.7 303.0L1069.9 301.1L1070.1 309.9L1070.3 303.6L1070.5 308.6L1070.8 333.9L1071.0 302.5L1071.2 302.9L1071.4 302.7L1071.6 311.0L1071.9 295.2L1072.1 303.7L1072.3 298.7L1072.5 305.9L1072.7 310.4L1073.0 303.2L1073.2 313.4L1073.4 295.3L1073.6 306.3L1073.8 315.2L1074.1 308.5L1074.3 301.5L1074.5 303.5L1074.7 300.3L1074.9 297.2L1075.2 298.2L1075.4 292.3L1075.6 309.4L1075.8 304.4L1076.0 306.4L1076.3 304.9L1076.5 302.7L1076.7 309.1L1076.9 299.2L1077.1 304.5L1077.4 302.4L1077.6 305.2L1077.8 297.5L1078.0 299.1L1078.2 304.2L1078.5 304.7L1078.7 321.5L1078.9 298.9L1079.1 314.7L1079.3 307.5L1079.6 310.8L1079.8 305.6L1080.0 310.3L1080.2 305.8L1080.4 302.8L1080.7 302.5L1080.9 302.3L1081.1 293.8L1081.3 292.7L1081.5 300.6L1081.8 307.9L1082.0 310.9L1082.2 303.2L1082.4 298.7L1082.6 297.1L1082.9 304.2L1083.1 302.0L1083.3 302.4L1083.5 296.4L1083.7 297.8L1084.0 300.1L1084.2 306.4L1084.4 306.2L1084.6 297.1L1084.8 303.1L1085.1 306.0L1085.3 306.0L1085.5 305.8L1085.7 304.2L1085.9 300.6L1086.2 302.7L1086.4 320.9L1086.6 302.6L1086.8 306.8L1087.0 309.3L1087.3 317.9L1087.5 308.5L1087.7 303.2L1087.9 304.7L1088.1 302.0L1088.4 312.3L1088.6 316.4L1088.8 300.7L1089.0 299.7L1089.2 299.1L1089.5 307.0L1089.7 305.0L1089.9 302.1L1090.1 302.1L1090.3 308.8L1090.6 337.2L1090.8 312.1L1091.0 307.4L1091.2 305.6L1091.4 300.8L1091.7 303.6L1091.9 306.1L1092.1 325.8L1092.3 301.9L1092.5 305.9L1092.8 308.7L1093.0 293.7L1093.2 312.5L1093.4 297.8L1093.6 299.4L1093.9 297.9L1094.1 300.4L1094.3 307.9L1094.5 304.9L1094.7 313.1L1095.0 316.4L1095.2 300.8L1095.4 296.3L1095.6 299.1L1095.8 304.3L1096.1 300.5L1096.3 300.7L1096.5 311.5L1096.7 295.6L1096.9 305.5L1097.2 314.9L1097.4 301.1L1097.6 306.9L1097.8 306.8L1098.0 311.7L1098.3 298.2L1098.5 294.0L1098.7 315.4L1098.9 312.7L1099.1 306.9L1099.4 321.4L1099.6 302.4L1099.8 303.8L1100.0 305.6L1100.2 303.1L1100.5 304.1L1100.7 306.2L1100.9 304.3L1101.1 304.0L1101.3 298.3L1101.6 301.5L1101.8 299.3L1102.0 305.0L1102.2 302.8L1102.4 309.2L1102.7 305.7L1102.9 309.0L1103.1 310.3L1103.3 307.4L1103.5 304.2L1103.8 310.6L1104.0 307.7L1104.2 309.4L1104.4 305.1L1104.6 307.7L1104.9 307.7L1105.1 299.4L1105.3 306.9L1105.5 311.5L1105.7 299.0L1106.0 300.5L1106.2 313.3L1106.4 315.3L1106.6 294.9L1106.8 303.8L1107.1 306.2L1107.3 303.8L1107.5 295.8L1107.7 300.9L1107.9 310.1L1108.2 315.4L1108.4 301.1L1108.6 302.3L1108.8 303.2L1109.0 311.2L1109.3 306.9L1109.5 300.8L1109.7 297.7L1109.9 310.2L1110.1 299.5L1110.4 335.0L1110.6 298.5L1110.8 304.9L1111.0 308.9L1111.2 308.4L1111.5 299.1L1111.7 321.5L1111.9 307.1L1112.1 308.3L1112.3 292.6L1112.6 298.8L1112.8 341.5L1113.0 294.1L1113.2 294.2L1113.4 294.0L1113.7 306.4L1113.9 308.8L1114.1 303.8L1114.3 302.0L1114.5 305.5L1114.8 307.1L1115.0 316.2L1115.2 302.6L1115.4 309.4L1115.6 301.7L1115.9 307.2L1116.1 313.8L1116.3 298.1L1116.5 304.4L1116.7 301.2L1117.0 309.6L1117.2 302.9L1117.4 302.2L1117.6 300.7L1117.8 298.7L1118.1 295.0L1118.3 304.9L1118.5 302.1L1118.7 340.9L1118.9 324.4L1119.2 321.8L1119.4 304.1L1119.6 303.0L1119.8 301.9L1120.0 299.6L1120.3 301.6L1120.5 299.2L1120.7 325.5L1120.9 314.3L1121.1 303.3L1121.4 307.9L1121.6 302.9L1121.8 299.0L1122.0 304.2L1122.2 320.5L1122.5 321.8L1122.7 300.5L1122.9 295.6L1123.1 313.4L1123.3 298.5L1123.6 324.3L1123.8 305.6L1124.0 305.5L1124.2 308.9L1124.4 308.9L1124.7 305.8L1124.9 319.8L1125.1 309.3L1125.3 302.8L1125.5 300.8L1125.8 310.2L1126.0 307.9L1126.2 309.8L1126.4 296.0L1126.6 313.8L1126.9 302.8L1127.1 301.7L1127.3 304.3L1127.5 298.7L1127.7 297.2L1128.0 302.9L1128.2 304.1L1128.4 311.8L1128.6 299.2L1128.8 311.7L1129.1 306.8L1129.3 312.4L1129.5 294.6L1129.7 302.7L1129.9 302.8L1130.2 302.4L1130.4 303.3L1130.6 303.4L1130.8 323.0L1131.0 301.7L1131.3 305.5L1131.5 301.7L1131.7 305.2L1131.9 306.1L1132.1 307.3L1132.4 307.1L1132.6 305.0L1132.8 303.9L1133.0 305.5L1133.2 323.3L1133.5 304.8L1133.7 300.8L1133.9 302.3L1134.1 300.9L1134.3 301.5L1134.6 307.4L1134.8 301.2L1135.0 320.5L1135.2 306.2L1135.4 309.1L1135.7 310.3L1135.9 310.8L1136.1 292.4L1136.3 301.9L1136.5 308.2L1136.8 317.1L1137.0 300.6L1137.2 297.5L1137.4 303.3L1137.6 304.2L1137.9 306.5L1138.1 298.8L1138.3 301.4L1138.5 304.5L1138.7 319.3L1139.0 299.9L1139.2 298.9L1139.4 296.9L1139.6 305.6L1139.8 299.5L1140.1 300.0L1140.3 303.3L1140.5 296.4L1140.7 310.7L1140.9 320.3L1141.2 297.7L1141.4 298.4L1141.6 297.2L1141.8 301.9L1142.0 292.6L1142.3 309.6L1142.5 309.1L1142.7 312.7L1142.9 343.7L1143.1 304.0L1143.4 300.5L1143.6 299.9L1143.8 308.5L1144.0 307.9L1144.2 298.7L1144.5 314.7L1144.7 310.6L1144.9 306.0L1145.1 299.4L1145.3 305.9L1145.6 306.5L1145.8 295.7L1146.0 303.8L1146.2 311.6L1146.4 303.1L1146.7 313.7L1146.9 298.1L1147.1 302.2L1147.3 305.6L1147.5 314.5L1147.8 304.5L1148.0 316.4L1148.2 310.8L1148.4 302.6L1148.6 304.3L1148.9 308.6L1149.1 305.7L1149.3 309.3L1149.5 304.2L1149.7 307.1L1150.0 297.1L1150.2 299.9L1150.4 301.0L1150.6 303.8L1150.8 309.2L1151.1 307.0L1151.3 308.4L1151.5 309.8L1151.7 301.3L1151.9 295.2L1152.2 308.0L1152.4 308.1L1152.6 295.9L1152.8 307.6L1153.0 302.0L1153.3 305.5L1153.5 299.5L1153.7 318.7L1153.9 308.7L1154.1 310.2L1154.4 297.4L1154.6 307.1L1154.8 300.3L1155.0 304.2L1155.2 307.8L1155.5 309.6L1155.7 314.4L1155.9 297.2L1156.1 315.3L1156.3 306.3L1156.6 295.4L1156.8 303.6L1157.0 306.2L1157.2 309.4L1157.4 301.0L1157.7 300.1L1157.9 307.9L1158.1 296.7L1158.3 302.1L1158.5 300.9L1158.8 304.3L1159.0 308.1L1159.2 299.2L1159.4 305.6L1159.6 302.0L1159.9 291.3L1160.1 306.4L1160.3 299.6L1160.5 303.0L1160.7 309.4L1161.0 324.3L1161.2 300.2L1161.4 299.9L1161.6 296.1L1161.8 299.9L1162.1 307.9L1162.3 303.9L1162.5 305.7L1162.7 311.1L1162.9 301.0L1163.2 297.8L1163.4 325.2L1163.6 306.2L1163.8 311.8L1164.0 298.7L1164.3 305.0L1164.5 304.8L1164.7 304.8L1164.9 298.5L1165.1 299.6L1165.4 304.4L1165.6 315.8L1165.8 300.5L1166.0 307.1L1166.2 311.1L1166.5 308.7L1166.7 309.5L1166.9 298.8L1167.1 302.5L1167.3 340.3L1167.6 308.5L1167.8 306.3L1168.0 302.2L1168.2 301.0L1168.4 303.4L1168.7 308.1L1168.9 316.6L1169.1 294.0L1169.3 314.5L1169.5 302.1L1169.8 304.8L1170.0 304.7L1170.2 303.7L1170.4 302.1L1170.6 298.2L1170.9 303.8L1171.1 305.1L1171.3 302.0L1171.5 314.4L1171.7 299.5L1172.0 301.1" fill="none" stroke="#0cb655" stroke-width="1.1" stroke-linejoin="round"/></g><defs><clipPath id="sc"><circle cx="445.2" cy="552.6" r="93.5"/></clipPath></defs><g clip-path="url(#sc)" fill="none" stroke="#858585" stroke-width="0.9"><circle cx="460.78" cy="552.6" r="77.92"/><circle cx="476.37" cy="552.6" r="62.33"/><circle cx="491.95" cy="552.6" r="46.75"/><circle cx="507.53" cy="552.6" r="31.17"/><circle cx="523.12" cy="552.6" r="15.58"/><circle cx="530.20" cy="552.6" r="8.50"/><circle cx="538.70" cy="85.10" r="467.50"/><circle cx="538.70" cy="1020.10" r="467.50"/><circle cx="538.70" cy="365.60" r="187.00"/><circle cx="538.70" cy="739.60" r="187.00"/><circle cx="538.70" cy="459.10" r="93.50"/><circle cx="538.70" cy="646.10" r="93.50"/><circle cx="538.70" cy="505.85" r="46.75"/><circle cx="538.70" cy="599.35" r="46.75"/><circle cx="538.70" cy="533.90" r="18.70"/><circle cx="538.70" cy="571.30" r="18.70"/><circle cx="538.70" cy="543.25" r="9.35"/><circle cx="538.70" cy="561.95" r="9.35"/><path d="M351.7 552.6H538.7"/></g><circle cx="445.2" cy="552.6" r="93.5" fill="none" stroke="#8a8a8a" stroke-width="1"/><text x="348.7" y="564.5" text-anchor="end" font-size="13" fill="#7e7e7e">0</text><text x="381.8" y="564.5" text-anchor="end" font-size="13" fill="#7e7e7e">.2</text><text x="413.4" y="564.5" text-anchor="end" font-size="13" fill="#7e7e7e">.5</text><text x="442" y="564.5" text-anchor="end" font-size="13" fill="#7e7e7e">1</text><text x="473.8" y="564.5" text-anchor="end" font-size="13" fill="#7e7e7e">2</text><text x="505.4" y="564.5" text-anchor="end" font-size="13" fill="#7e7e7e">5</text><text x="452.2" y="454.7" text-anchor="end" font-size="13" fill="#7e7e7e">1</text><text x="386" y="474" text-anchor="end" font-size="13" fill="#7e7e7e">.5</text><text x="357.3" y="513.3" text-anchor="end" font-size="13" fill="#7e7e7e">.2</text><text x="509.7" y="474" text-anchor="end" font-size="13" fill="#7e7e7e">2</text><text x="540" y="513.3" text-anchor="end" font-size="13" fill="#7e7e7e">5</text><text x="544.2" y="599.9" text-anchor="end" font-size="13" fill="#7e7e7e">-5</text><text x="514" y="639.3" text-anchor="end" font-size="13" fill="#7e7e7e">-2</text><text x="458" y="658" text-anchor="end" font-size="13" fill="#7e7e7e">-1</text><text x="386" y="639.3" text-anchor="end" font-size="13" fill="#7e7e7e">-.5</text><text x="357.3" y="599.9" text-anchor="end" font-size="13" fill="#7e7e7e">-.2</text><path d="M529.5 551.0L529.6 554.6L529.7 559.9L529.8 566.0L529.8 572.2L529.8 578.0L529.5 582.5L529.1 585.7L528.5 588.1L527.9 589.9L527.1 591.5L526.1 593.1L525.0 595.0L523.7 597.1L522.2 599.2L520.5 601.2L518.7 603.3L516.9 605.4L515.0 607.5L513.1 609.6L511.0 611.9L508.9 614.1L506.8 616.2L504.6 618.2L502.5 620.0L500.5 621.5L498.5 622.7L496.5 623.8L494.4 624.8L492.3 625.9L490.0 627.0L487.7 628.3L485.3 629.6L482.9 631.0L480.3 632.3L477.3 633.5L473.8 634.5L469.6 635.4L464.8 636.2L459.6 636.9L454.4 637.4L449.4 637.8L445.0 638.0L441.1 638.0L437.5 637.9L434.1 637.7L430.9 637.2L427.8 636.5L424.9 635.5L422.0 634.1L419.2 632.4L416.6 630.5L414.1 628.4L411.9 626.2L410.0 624.0L408.4 621.8L407.1 619.3L406.0 616.8L405.1 614.4L404.5 612.1L404.0 610.0L403.8 608.2L403.8 606.5L404.0 605.0L404.4 603.6L404.9 602.3L405.5 601.0L406.2 599.7L407.2 598.3L408.3 597.1L409.4 596.0L410.4 595.0L411.2 594.4L412.0 594.1L412.6 594.2L413.2 594.4L413.7 594.8L414.1 595.1L414.4 595.2" fill="none" stroke="#1ea4e6" stroke-width="1.0" stroke-linejoin="round"/><path d="M414.4 595.2L413.7 594.8L412.7 594.3L411.5 593.6L410.2 592.9L409.1 592.1L408.1 591.2L407.3 590.4L406.6 589.5L405.9 588.5L405.4 587.4L404.8 586.3L404.4 585.0L404.0 583.5L403.7 581.9L403.4 580.2L403.2 578.4L403.1 576.6L403.1 575.0L403.2 573.5L403.4 571.9L403.7 570.5L404.0 569.0L404.5 567.6L405.0 566.2L405.6 564.9L406.4 563.5L407.3 562.2L408.2 560.9L409.1 559.8L410.0 558.8L410.9 557.9L411.8 557.1L412.7 556.4L413.7 555.9L414.6 555.4L415.6 555.0L416.6 554.7L417.6 554.5L418.7 554.4L419.7 554.4L420.8 554.4L421.9 554.4L423.1 554.5L424.3 554.6L425.6 554.7L426.8 554.9L427.9 555.2L428.8 555.6L429.5 556.1L430.1 556.7L430.5 557.3L430.9 558.0L431.1 558.7L431.2 559.4L431.2 560.1L431.1 560.7L430.8 561.4L430.4 562.0L429.9 562.6L429.4 563.1L428.8 563.5L428.1 563.9L427.4 564.2L426.6 564.4L425.8 564.5L425.0 564.4L424.2 564.1L423.3 563.6L422.4 562.9L421.6 562.2L420.8 561.4L420.0 560.6L419.3 559.8L418.6 558.8L417.9 557.9L417.4 556.9L416.9 555.9L416.5 555.0L416.3 554.1L416.2 553.3L416.2 552.5L416.3 551.7L416.4 550.9L416.5 550.0L416.6 549.1L416.8 548.2L417.1 547.2L417.3 546.3L417.7 545.3L418.1 544.4L418.6 543.4L419.1 542.5L419.8 541.5L420.4 540.5L421.1 539.6L421.9 538.8L422.7 537.9L423.7 537.1L424.6 536.3L425.6 535.6L426.6 534.9L427.5 534.4L428.4 534.0L429.2 533.7L430.0 533.5L430.9 533.3L431.7 533.2L432.5 533.1L433.3 533.0L434.2 533.0L435.1 533.1L435.9 533.2L436.7 533.3L437.5 533.5L438.2 533.7L438.9 534.0L439.6 534.3L440.2 534.7L440.8 535.1L441.2 535.6L441.6 536.1L442.0 536.7L442.2 537.4L442.4 538.1L442.5 538.8L442.5 539.4L442.4 540.1L442.2 540.7L441.9 541.4L441.5 542.0L441.1 542.6L440.6 543.1L440.0 543.5L439.4 543.9L438.6 544.1L437.8 544.3L437.0 544.4L436.2 544.4L435.4 544.3L434.6 544.0L433.7 543.7L432.8 543.2L432.0 542.6L431.2 541.9L430.5 541.0L429.9 540.0L429.2 538.8L428.6 537.6L428.1 536.3L427.8 535.0L427.5 533.7L427.3 532.4L427.2 531.0L427.2 529.6L427.3 528.2L427.5 526.9L427.9 525.6L428.3 524.2L428.9 522.9L429.6 521.6L430.4 520.5L431.2 519.4L432.3 518.4L433.4 517.6L434.7 516.8L436.0 516.1L437.4 515.5L438.8 515.0L440.2 514.6L441.7 514.4L443.2 514.2L444.7 514.2L446.2 514.2L447.5 514.4L448.8 514.7L450.0 515.0L451.1 515.5L452.2 516.1L453.1 516.8L453.8 517.5L454.2 518.4L454.6 519.4L454.7 520.4L454.8 521.5L454.6 522.7L454.4 523.8L454.0 524.8L453.5 525.9L452.8 527.0L452.0 528.1L451.0 529.1L450.0 530.0L448.8 530.8L447.4 531.5L445.9 532.2L444.3 532.7L442.8 533.2L441.2 533.5L439.7 533.7L438.2 533.7L436.6 533.6L435.1 533.4L433.7 533.2L432.5 533.1L431.5 533.0L430.8 533.0L430.1 533.0L429.5 532.9L428.9 532.8L428.1 532.5L427.2 532.1L426.3 531.6L425.4 531.1L424.4 530.4L423.4 529.6L422.5 528.8L421.5 527.8L420.6 526.7L419.6 525.5L418.6 524.2L417.7 522.8L416.9 521.2L416.1 519.6L415.4 517.7L414.7 515.8L414.1 513.8L413.5 511.8L413.1 510.0L412.8 508.2L412.6 506.5L412.5 504.8L412.5 503.1L412.5 501.5L412.5 500.0L412.5 498.6L412.6 497.2L412.7 495.9L412.8 494.7L413.1 493.4L413.4 492.0L413.8 490.5L414.2 489.0L414.8 487.5L415.4 485.9L416.1 484.4L417.0 483.0L418.0 481.6L419.1 480.3L420.3 479.0L421.6 477.8L423.2 476.6L424.9 475.4L426.9 474.3L429.1 473.2L431.5 472.1L434.1 471.1L436.7 470.2L439.3 469.5L442.0 468.9L444.7 468.5L447.5 468.1L450.4 467.9L453.4 467.8L456.5 467.8L459.7 467.9L463.0 468.0L466.4 468.3L469.8 468.6L473.2 469.2L476.6 470.0L480.0 471.0L483.4 472.2L486.9 473.5L490.3 475.1L493.6 476.8L496.8 478.6L499.9 480.6L502.9 482.7L505.8 485.0L508.6 487.4L511.3 490.0L514.0 492.8L516.7 495.8L519.3 499.1L521.9 502.6L524.3 506.1L526.5 509.6L528.4 513.0L530.0 516.2L531.3 519.4L532.4 522.6L533.4 525.7L534.2 528.8L535.0 532.0L535.7 535.2L536.3 538.3L536.7 541.5L537.1 544.7L537.3 547.8L537.5 551.0L537.6 554.2L537.6 557.3L537.6 560.5L537.4 563.7L537.2 566.8L536.8 570.0L536.4 573.2L535.8 576.5L535.2 579.7L534.5 582.9L533.6 586.0L532.5 589.0L531.2 591.8L529.8 594.6L528.2 597.2L526.5 599.8L524.8 602.2L523.0 604.5L521.1 606.6L519.1 608.6L517.1 610.5L515.0 612.3L513.0 614.0L511.0 615.5L509.1 616.9L507.2 618.2L505.4 619.3L503.6 620.4L501.8 621.5L500.0 622.5L498.2 623.6L496.2 624.6L494.3 625.7L492.6 626.6L491.1 627.4L490.0 628.0" fill="none" stroke="#1ea4e6" stroke-width="1.0" stroke-linejoin="round"/><g clip-path="url(#c4)"><path d="M696.5 497.1L696.5 607.0L697.5 566.8L697.5 494.9L698.5 483.2L698.5 642.3L699.5 596.2L699.5 481.5L700.5 483.3L700.5 617.4L701.5 619.4L701.5 488.3L702.5 495.0L702.5 617.2L703.5 637.7L703.5 482.9L704.5 480.2L704.5 521.5L705.5 636.6L705.5 491.1L706.5 479.5L706.5 623.4L707.5 612.7L707.5 496.6L708.5 594.1L708.5 598.1L709.5 610.5L709.5 492.7L710.5 463.7L710.5 621.7L711.5 618.1L711.5 501.4L712.5 544.6L712.5 635.3L713.5 562.0L713.5 485.0L714.5 485.2L714.5 605.9L715.5 620.0L715.5 485.1L716.5 480.3L716.5 615.5L717.5 616.8L717.5 464.7L718.5 482.6L718.5 594.7L719.5 604.2L719.5 482.8L720.5 494.5L720.5 639.0L721.5 607.8L721.5 499.3L722.5 484.9L722.5 590.9L723.5 609.5L723.5 505.6L724.5 491.9L724.5 609.4L725.5 599.4L725.5 483.3L726.5 463.8L726.5 600.4L727.5 599.0L727.5 498.3L728.5 466.2L728.5 606.9M729.5 644.0L729.5 545.0L730.5 538.0L730.5 644.0L731.5 644.0L731.5 532.0M732.5 465.7L732.5 525.7L733.5 639.0L733.5 469.9L734.5 482.3L734.5 621.8L735.5 614.4L735.5 474.3L736.5 463.4L736.5 606.5L737.5 608.6L737.5 478.5L738.5 474.7L738.5 625.0L739.5 625.0L739.5 476.7L740.5 470.3L740.5 612.6L741.5 602.7L741.5 466.8L742.5 470.8L742.5 613.6L743.5 618.6L743.5 571.8L744.5 480.5L744.5 617.3L745.5 602.2L745.5 464.5L746.5 476.8L746.5 617.0L747.5 607.5L747.5 482.1L748.5 478.1L748.5 636.1L749.5 600.1L749.5 478.6L750.5 481.7L750.5 586.5L751.5 637.3L751.5 479.3L752.5 472.6L752.5 624.3L753.5 623.8L753.5 471.4L754.5 473.1L754.5 619.4L755.5 640.2L755.5 479.6L756.5 485.8L756.5 637.5L757.5 631.9L757.5 483.8L758.5 466.3L758.5 642.2L759.5 637.8L759.5 502.4L760.5 466.9L760.5 536.8L761.5 542.0L761.5 470.0L762.5 473.0L762.5 613.9L763.5 619.6L763.5 470.6L764.5 473.2L764.5 617.6L765.5 561.9L765.5 475.4L766.5 466.3L766.5 633.8L767.5 634.8L767.5 465.1L768.5 463.8L768.5 630.4L769.5 619.8L769.5 469.9L770.5 463.1L770.5 637.8L771.5 642.2L771.5 515.4L772.5 463.4L772.5 619.4L773.5 618.0L773.5 462.6L774.5 538.1L774.5 624.4L775.5 623.2L775.5 463.1L776.5 465.7L776.5 641.9L777.5 625.4L777.5 467.4L778.5 472.5L778.5 528.6L778.5 472.5L779.5 471.6L779.5 509.4L779.5 471.6L780.5 480.0L780.5 600.8L780.5 480.0L781.5 478.5L781.5 504.1L781.5 478.5L782.5 478.0L782.5 510.3L782.5 478.0L783.5 476.5L783.5 497.1L783.5 476.5L784.5 484.1L784.5 605.2L784.5 484.1L785.5 478.9L785.5 527.0L785.5 478.9L786.5 478.1L786.5 530.4L786.5 478.1L787.5 486.8L787.5 611.0L787.5 486.8L788.5 483.0L788.5 501.8L788.5 483.0L789.5 481.9L789.5 631.5L789.5 481.9L790.5 483.2L790.5 616.8L790.5 483.2L791.5 463.2L791.5 512.1L792.5 509.3L792.5 478.1L793.5 474.2L793.5 515.5L794.5 551.2L794.5 471.0L795.5 476.4L795.5 522.2L796.5 538.3L796.5 477.6L797.5 500.2L797.5 524.4L798.5 521.2L798.5 479.2L799.5 479.6L799.5 518.1L800.5 540.2L800.5 478.8L801.5 479.3L801.5 512.1L802.5 515.6L802.5 481.3L803.5 483.5L803.5 552.9L804.5 523.2L804.5 482.1L805.5 486.0L805.5 510.1L806.5 511.6L806.5 485.0L807.5 484.9L807.5 509.9L808.5 521.6L808.5 487.7L809.5 488.2L809.5 507.7L810.5 506.7L810.5 485.5L811.5 490.4L811.5 513.3L812.5 510.2L812.5 489.2L813.5 496.3L813.5 515.8L814.5 515.7L814.5 487.6L815.5 495.8L815.5 517.5L816.5 513.4L816.5 495.1L817.5 500.3L817.5 512.7L818.5 509.3L818.5 495.6L819.5 495.6L819.5 514.3L820.5 512.6L820.5 501.2L821.5 497.5L821.5 514.4L822.5 508.0L822.5 497.6L823.5 504.6L823.5 512.4L824.5 513.6L824.5 499.0L825.5 502.7L825.5 514.7L826.5 511.0L826.5 503.3L827.5 502.7L827.5 509.1L828.5 507.2L828.5 501.7L829.5 501.7L829.5 509.8L830.5 509.3L830.5 504.3L831.5 505.5L831.5 509.4L832.5 510.7L832.5 507.7L833.5 511.2L833.5 514.2L834.5 507.0L836.4 507.4L839.0 508.0L842.0 508.7L845.2 509.5L848.3 510.4L851.0 511.3L853.3 512.3L855.4 513.4L857.3 514.6L859.2 515.9L861.0 517.2L862.7 518.5L864.3 519.7L865.8 520.9L867.2 522.1L868.5 523.5L869.9 525.1L871.3 527.0L872.8 529.3L874.4 531.9L875.9 534.8L877.4 537.9L878.8 541.1L880.0 544.4L881.0 547.8L881.8 551.3L882.5 555.0L883.1 558.8L883.7 562.9L884.3 567.3L884.8 571.9L885.3 576.8L885.8 581.8L886.2 587.2L886.6 592.9L887.1 599.0L887.6 606.1L888.3 614.4L888.9 623.0L889.5 631.1L889.9 638.1L890.3 643.0L890.5 464.0L916.3 643.5L916.6 463.5L941.8 643.5L942.2 463.2L943.0 463.5L943.4 463.4L943.8 464.3L944.2 464.6L944.6 464.3L945.0 464.4L945.4 464.7L945.8 464.8L946.2 465.3L946.6 464.9L947.0 465.6L947.4 465.7L947.8 465.8L948.2 466.2L948.6 466.0L949.0 466.1L949.4 466.4L949.8 466.5L950.2 467.5L950.6 466.8L951.0 466.8L951.4 467.6L951.8 467.6L952.2 467.7L952.6 467.5L953.0 467.5L953.4 467.8L953.8 468.1L954.2 468.2L954.6 468.8L955.0 468.9L955.4 469.1L955.8 469.0L956.2 469.8L956.6 469.2L957.0 470.0L957.4 469.8L957.8 470.7L958.2 470.3L958.6 470.6L959.0 470.6L959.4 470.9L959.8 470.8L960.2 472.3L960.6 471.5L961.0 472.0L961.4 472.5L961.8 472.4L962.2 473.1L962.6 472.9L963.0 473.7L963.4 473.7L963.8 474.0L964.2 474.0L964.6 474.5L965.0 474.2L965.4 475.4L965.8 475.4L966.2 475.4L966.6 476.4L967.0 476.2L967.4 476.8L967.8 476.6L968.2 477.0L968.6 477.3L969.0 478.2L969.4 477.3L969.8 478.4L970.2 478.4L970.6 478.0L971.0 479.2L971.4 479.2L971.8 478.3L972.2 479.9L972.6 479.2L973.0 476.0L973.4 480.0L973.8 480.6L974.2 480.3L974.6 483.6L975.0 483.6L975.4 480.1L975.8 483.6L976.2 478.6L976.6 482.8L977.0 484.5L977.4 482.2L977.8 480.6L978.2 482.0L978.6 477.9L979.0 481.8L979.4 486.4L979.8 487.0L980.2 483.9L980.6 483.7L981.0 485.0L981.4 480.1L981.8 478.7L982.2 484.8L982.6 485.6L983.0 483.8L983.4 484.2L983.8 485.7L984.2 482.3L984.6 489.4L985.0 490.9L985.4 487.1L985.8 478.8L986.2 489.5L986.6 492.2L987.0 484.6L987.4 477.8L987.8 485.8L988.2 502.5L988.6 481.9L989.0 494.1L989.4 488.4L989.8 497.3L990.2 503.8L990.6 496.9L991.0 494.0L991.4 489.8L991.8 481.6L992.2 477.7L992.6 503.2L993.0 488.9L993.4 502.2L993.8 494.8L994.2 489.0L994.6 487.5L995.0 501.9L995.4 488.6L995.8 492.0L996.5 465.2L996.5 617.1L997.5 599.0L997.5 489.9L998.5 501.2L998.5 610.6L999.5 614.1L999.5 495.6L1000.5 581.7L1000.5 638.6L1001.5 619.2L1001.5 497.5L1002.5 585.9L1002.5 626.1L1003.5 618.6L1003.5 593.8L1004.5 501.4L1004.5 626.4L1005.5 640.2L1005.5 491.2L1006.5 492.0L1006.5 630.4L1007.5 633.1L1007.5 493.9L1008.5 504.0L1008.5 630.4L1009.5 629.9L1009.5 494.0L1010.5 545.5L1010.5 611.4L1011.5 631.3L1011.5 489.4L1012.5 487.0L1012.5 643.9L1013.5 626.7L1013.5 489.4L1014.5 536.7L1014.5 619.5L1015.5 543.7L1015.5 498.8L1016.5 470.4L1016.5 615.2L1017.5 613.8L1017.5 519.9L1018.5 502.6L1018.5 611.5L1019.5 619.3L1019.5 493.2L1020.5 503.6L1020.5 615.6L1021.5 605.5L1021.5 492.0L1022.5 584.2L1022.5 596.7L1023.5 638.7L1023.5 494.5L1024.5 507.1L1024.5 615.3L1025.5 610.5L1025.5 496.4L1026.5 490.1L1026.5 550.3L1027.5 600.5L1027.5 470.0L1028.5 501.0L1028.5 607.7L1029.5 525.8L1029.5 482.3L1030.5 505.0L1030.5 592.8L1031.5 606.4L1031.5 478.6L1032.5 467.8L1032.5 601.8L1033.5 605.1L1033.5 478.5L1034.5 489.7L1034.5 527.3L1035.5 597.1L1035.5 476.9L1036.5 487.1L1036.5 600.5L1037.5 635.7L1037.5 470.9L1038.5 524.0L1038.5 642.3L1039.5 590.3L1039.5 469.0L1040.5 532.3L1040.5 590.6L1041.5 581.3L1041.5 478.9L1042.5 475.9L1042.5 593.1L1043.5 604.2L1043.5 482.1L1044.5 556.8L1044.5 595.3L1045.5 603.6L1045.5 484.2L1046.5 536.8L1046.5 583.7L1047.5 603.9L1047.5 499.3L1048.5 496.3L1048.5 608.6L1049.5 639.1L1049.5 487.3L1050.5 491.4L1050.5 618.1L1051.5 547.0L1051.5 489.6L1052.5 466.6L1052.5 614.0L1053.5 568.7L1053.5 467.9L1054.5 516.1L1054.5 618.6L1055.5 610.3L1055.5 469.4L1056.5 491.8L1056.5 619.1L1057.5 621.5L1057.5 500.3L1058.5 558.4L1058.5 607.5L1059.5 610.4L1059.5 494.4L1060.5 495.9L1060.5 617.7L1061.5 604.4L1061.5 466.2L1062.5 517.9L1062.5 620.5L1063.5 635.6L1063.5 506.7L1064.5 525.0L1064.5 541.4L1065.5 611.7L1065.5 502.3L1066.5 510.1L1066.5 620.5L1067.5 623.7L1067.5 505.4L1068.5 519.0L1068.5 620.7L1069.5 639.5L1069.5 513.6L1070.5 517.6L1070.5 625.7L1071.5 626.6L1071.5 516.1L1072.5 515.7L1072.5 624.7L1073.5 616.8L1073.5 547.8L1074.5 511.1L1074.5 624.2L1075.5 596.1L1075.5 511.2L1076.5 557.7L1076.5 618.1L1077.5 614.3L1077.5 517.6L1078.5 510.1L1078.5 609.2L1079.5 612.5L1079.5 547.5L1080.5 501.6L1080.5 594.9L1081.5 607.7L1081.5 499.4L1082.5 503.4L1082.5 642.6L1083.5 598.1L1083.5 505.9L1084.5 492.7L1084.5 594.8L1085.5 607.0L1085.5 502.3L1086.5 487.2L1086.5 600.6L1087.5 641.0L1087.5 491.1L1088.5 493.1L1088.5 613.0L1089.5 614.3L1089.5 498.4L1090.5 570.6L1090.5 613.1L1091.5 603.8L1091.5 494.7L1092.5 503.4L1092.5 612.8L1093.5 619.8L1093.5 490.6L1094.5 491.9L1094.5 603.8L1095.5 624.1L1095.5 589.5L1096.5 510.0L1096.5 620.0L1097.5 596.8L1097.5 557.7L1098.5 508.8L1098.5 619.0L1099.5 607.4L1099.5 505.2L1100.5 470.2L1100.5 579.5L1101.5 621.7L1101.5 497.2L1102.5 511.0L1102.5 615.6L1103.5 626.7L1103.5 493.0L1104.5 491.7L1104.5 563.7L1105.5 640.1L1105.5 486.3L1106.5 492.5L1106.5 597.4L1107.5 630.5L1107.5 551.7L1108.5 507.3L1108.5 619.5L1109.5 629.3L1109.5 496.9L1110.5 497.1L1110.5 599.2L1111.5 638.8L1111.5 505.0L1112.5 544.2L1112.5 635.5L1113.5 631.3L1113.5 493.2L1114.5 499.0L1114.5 640.1L1115.5 635.1L1115.5 579.3L1116.5 506.1L1116.5 639.3L1117.5 631.2L1117.5 627.2L1118.5 528.4L1118.5 636.5L1119.5 641.7L1119.5 519.9L1120.5 508.1L1120.5 631.9L1121.5 631.3L1121.5 519.1L1122.5 469.5L1122.5 642.5L1123.5 618.5L1123.5 518.0L1124.5 509.5L1124.5 623.1L1125.5 602.6L1125.5 509.6L1126.5 517.0L1126.5 617.7L1127.5 604.8L1127.5 507.6L1128.5 512.2L1128.5 615.3L1129.5 600.7L1129.5 524.2L1130.5 462.7L1130.5 610.8L1131.5 595.7L1131.5 504.6L1132.5 505.7L1132.5 611.1L1133.5 602.6L1133.5 503.2L1134.5 487.9L1134.5 609.7L1135.5 612.9L1135.5 463.4L1136.5 501.4L1136.5 604.6L1137.5 606.1L1137.5 497.6L1138.5 515.0L1138.5 605.3L1139.5 614.7L1139.5 486.5L1140.5 496.4L1140.5 604.1L1141.5 617.9L1141.5 498.6L1142.5 484.0L1142.5 604.4L1143.5 599.8L1143.5 502.8L1144.5 525.1L1144.5 610.2L1145.5 598.7L1145.5 488.1L1146.5 548.9L1146.5 596.5L1147.5 609.3L1147.5 485.1L1148.5 486.8L1148.5 532.7L1149.5 606.3L1149.5 497.5L1150.5 474.9L1150.5 606.7L1151.5 605.5L1151.5 493.3L1152.5 477.9L1152.5 582.7L1153.5 561.7L1153.5 465.5L1154.5 472.1L1154.5 616.5L1155.5 643.4L1155.5 476.1L1156.5 490.5L1156.5 628.4L1157.5 617.8L1157.5 480.0L1158.5 476.9L1158.5 627.0L1159.5 614.4L1159.5 471.4L1160.5 472.8L1160.5 628.3L1161.5 611.4L1161.5 532.6L1162.5 484.3L1162.5 614.0L1163.5 622.1L1163.5 476.3L1164.5 543.7L1164.5 640.1L1165.5 617.1L1165.5 478.4L1166.5 492.1L1166.5 618.6L1167.5 572.2L1167.5 483.2L1168.5 495.2L1168.5 639.8L1169.5 602.2L1169.5 494.3L1170.5 517.8L1170.5 617.0L1171.5 589.6L1171.5 519.6" fill="none" stroke="#ff8000" stroke-width="1.05" stroke-linejoin="bevel"/></g></svg>
<div class="t" style="left:216px;top:378.1px;font-size:13.5px;color:#f0f0f0;letter-spacing:-0.9px;">2 GHz</div>
<div class="t" style="left:445.2px;top:378.1px;font-size:13.5px;color:#f0f0f0;letter-spacing:-0.8px;transform:translateX(-50%);">SWEEP: 1.5 s</div>
<div class="t" style="right:604.5px;top:378.1px;font-size:13.5px;color:#f0f0f0;letter-spacing:-0.9px;">3 GHz</div>
<div class="t" style="left:704px;top:378.1px;font-size:13.5px;color:#f0f0f0;letter-spacing:-0.9px;">2 GHz</div>
<div class="t" style="left:933.2px;top:378.1px;font-size:13.5px;color:#f0f0f0;letter-spacing:-0.8px;transform:translateX(-50%);">SWEEP: 1.5 s</div>
<div class="t" style="right:116.5px;top:378.1px;font-size:13.5px;color:#f0f0f0;letter-spacing:-0.9px;">3 GHz</div>
<div class="t" style="left:216px;top:680.1px;font-size:13.5px;color:#f0f0f0;letter-spacing:-0.9px;">2 GHz</div>
<div class="t" style="left:445.2px;top:680.1px;font-size:13.5px;color:#f0f0f0;letter-spacing:-0.8px;transform:translateX(-50%);">SWEEP: 1.5 s</div>
<div class="t" style="right:604.5px;top:680.1px;font-size:13.5px;color:#f0f0f0;letter-spacing:-0.9px;">3 GHz</div>
<div class="t" style="left:704px;top:680.1px;font-size:13.5px;color:#f0f0f0;letter-spacing:-0.9px;">2 GHz</div>
<div class="t" style="left:933.2px;top:680.1px;font-size:13.5px;color:#f0f0f0;letter-spacing:-0.8px;transform:translateX(-50%);">SWEEP: 1.5 s</div>
<div class="t" style="right:116.5px;top:680.1px;font-size:13.5px;color:#f0f0f0;letter-spacing:-0.9px;">3 GHz</div>
<div class="t" style="left:210px;top:722.0px;font-size:13px;color:#f0f0f0;letter-spacing:-0.35px;">POINTS 2000</div>
<div class="t" style="right:110px;top:722.0px;font-size:13px;color:#f0f0f0;letter-spacing:-0.18px;">IF BANDWIDTH 1 kHz</div>
<div class="a" style="left:690px;top:402px;width:488px;height:302px;border:3px solid #ff0000"></div>
<div class="a" style="left:202px;top:747px;width:976px;height:5px;background:#2b2b2a"></div><div class="a" style="left:1179px;top:747px;width:101px;height:5px;background:#2b2b2a"></div>
<div class="a" style="left:0;top:752px;width:1280px;height:48px;background:#2a997c"></div>
<svg class="a" style="left:0;top:752px" width="200" height="48"><path d="M73.3 13V34M62.8 23.5H83.8" stroke="#fff" stroke-width="2.6"/></svg>
<div class="t" style="left:92.6px;top:769.1px;font-size:16px;color:#fff;letter-spacing:-0.88px;">SHORTCUT</div>
</body></html>
